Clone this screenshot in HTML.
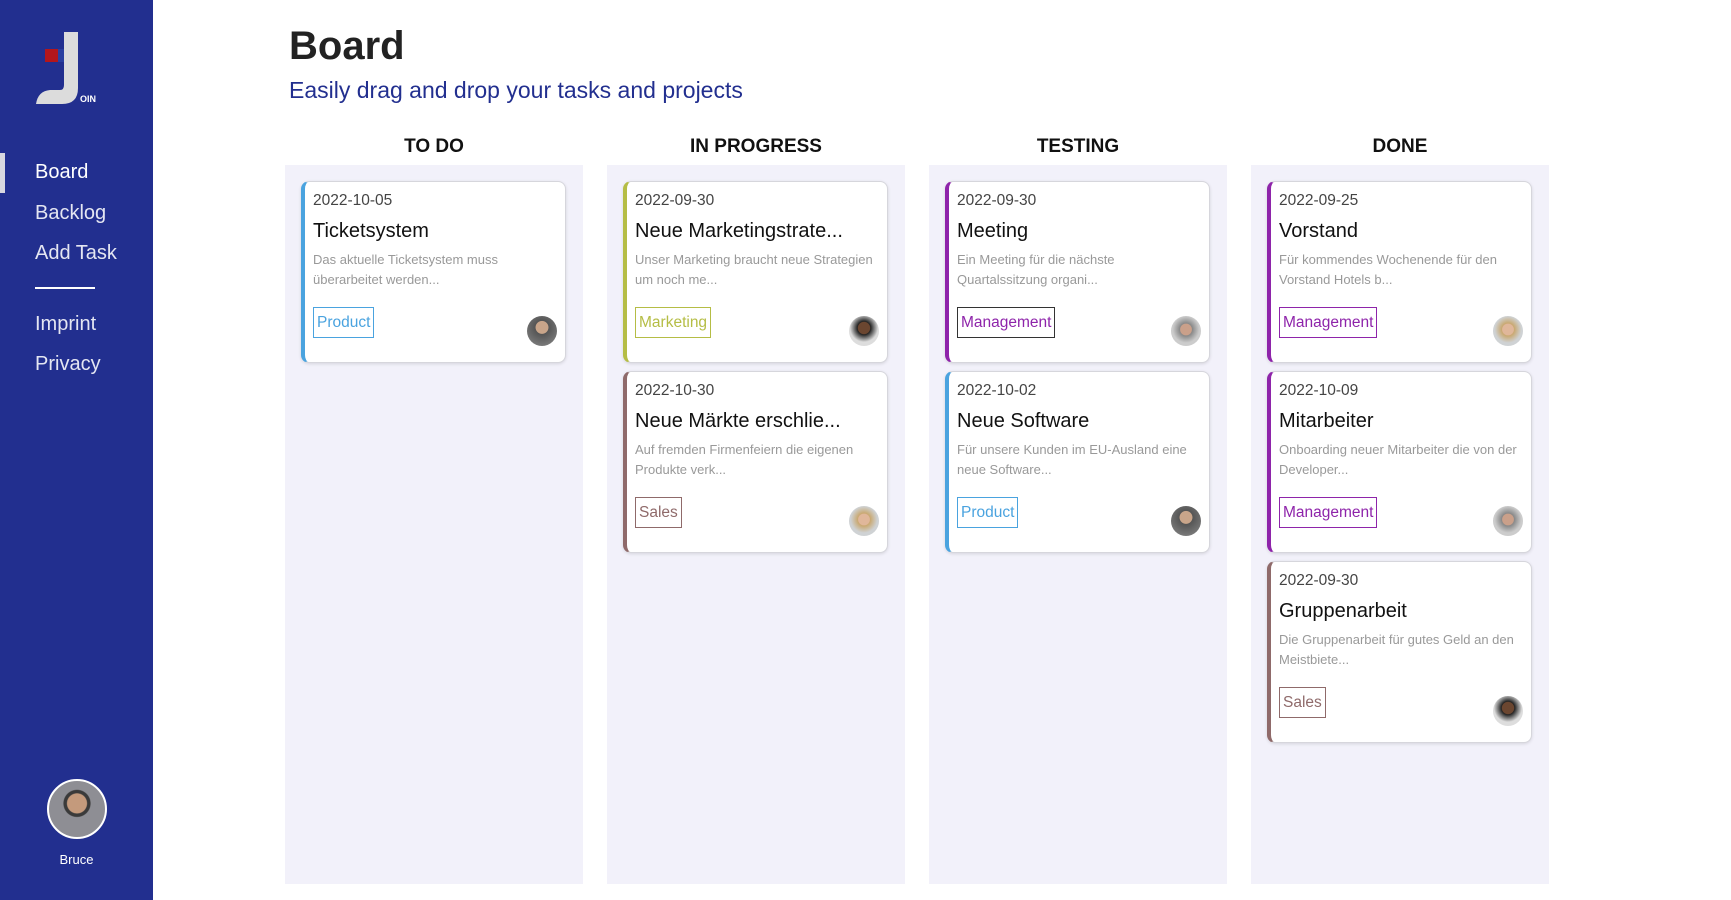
<!DOCTYPE html>
<html><head><meta charset="utf-8"><style>
*{margin:0;padding:0;box-sizing:border-box}
body{width:1731px;height:900px;background:#fff;font-family:"Liberation Sans",sans-serif;position:relative;overflow:hidden}
.sb{position:absolute;left:0;top:0;width:153px;height:900px;background:#222f8f}
.nav{position:absolute;left:35px;color:#fff;font-size:20px}
.nav.dim{color:#e4e6f2}
.act{position:absolute;left:0;top:153px;width:5px;height:40px;background:#d8d8e0}
.line{position:absolute;left:35px;top:287px;width:60px;height:2px;background:#fff}
h1{position:absolute;left:289px;top:24px;font-size:40px;font-weight:bold;color:#222}
.sub{position:absolute;left:289px;top:77px;font-size:23px;color:#222f8f}
.colh{position:absolute;top:136px;width:298px;text-align:center;font-size:19px;font-weight:bold;color:#111}
.col{position:absolute;top:165px;width:298px;height:719px;background:#f2f1fa}
.card{position:absolute;left:16px;width:265px;height:182px;background:#fff;border-radius:8px;border:1px solid #d6d6dc;border-left:4px solid;box-shadow:0 1px 3px rgba(0,0,0,.12)}
.d{position:absolute;left:8px;top:10px;font-size:15.5px;color:#444}
.t{position:absolute;left:8px;top:38px;font-size:20px;color:#111}
.ds{position:absolute;left:8px;top:68px;width:245px;font-size:13px;line-height:20px;color:#999}
.tag{position:absolute;left:8px;top:125px;height:31px;padding:0 3px;border:1px solid;font-size:15.5px;line-height:29px}
.av{position:absolute;left:222px;top:134px;width:30px;height:30px;border-radius:50%;background:radial-gradient(circle at 50% 38%,#c9a58a 0 26%,#555 28%,#8a8a8a 100%)}
</style></head><body>
<div class="sb">
<svg width="154" height="120" style="position:absolute;left:0;top:0">
<rect x="45" y="49" width="13" height="13" fill="#b3161c"/>
<rect x="58" y="49" width="6" height="13" fill="#2a3fa0"/>
<path d="M64 32 H78 V88 Q78 104 62 104 H36 Q38 91 50 90 H60 Q64 90 64 85 Z" fill="#dcdcdc"/>
<text x="80" y="102" font-size="9" font-weight="bold" fill="#fff" font-family="Liberation Sans">OIN</text>
</svg>
<div class="act"></div>
<div class="nav" style="top:161px">Board</div>
<div class="nav dim" style="top:202px">Backlog</div>
<div class="nav dim" style="top:242px">Add Task</div>
<div class="line"></div>
<div class="nav dim" style="top:313px">Imprint</div>
<div class="nav dim" style="top:353px">Privacy</div>
<div style="position:absolute;left:47px;top:779px;width:60px;height:60px;border-radius:50%;border:2px solid #fff;background:radial-gradient(circle at 50% 40%,#c49a7c 0 22%,#3a3a3a 24% 30%,#8e8e94 32%)"></div>
<div style="position:absolute;left:0;top:852px;width:153px;text-align:center;color:#fff;font-size:13px">Bruce</div>
</div>
<h1>Board</h1>
<div class="sub">Easily drag and drop your tasks and projects</div>

<div class="colh" style="left:285px">TO DO</div>
<div class="colh" style="left:607px">IN PROGRESS</div>
<div class="colh" style="left:929px">TESTING</div>
<div class="colh" style="left:1251px">DONE</div>

<div class="col" style="left:285px">
<div class="card" style="top:16px;border-left-color:#4aa3df"><div class="d">2022-10-05</div><div class="t">Ticketsystem</div><div class="ds">Das aktuelle Ticketsystem muss überarbeitet werden...</div><div class="tag" style="color:#4aa3df;border-color:#4aa3df">Product</div><div class="av"></div></div>
</div>
<div class="col" style="left:607px">
<div class="card" style="top:16px;border-left-color:#b5bd45"><div class="d">2022-09-30</div><div class="t">Neue Marketingstrate...</div><div class="ds">Unser Marketing braucht neue Strategien um noch me...</div><div class="tag" style="color:#b5bd45;border-color:#b5bd45">Marketing</div><div class="av" style="background:radial-gradient(circle at 50% 40%,#6b4630 0 25%,#222 28%,#ddd 60%)"></div></div>
<div class="card" style="top:206px;border-left-color:#8f6a6a"><div class="d">2022-10-30</div><div class="t">Neue Märkte erschlie...</div><div class="ds">Auf fremden Firmenfeiern die eigenen Produkte verk...</div><div class="tag" style="color:#8f6a6a;border-color:#8f6a6a">Sales</div><div class="av" style="background:radial-gradient(circle at 50% 45%,#e0b79a 0 25%,#c9a870 28%,#cfd2d4 60%)"></div></div>
</div>
<div class="col" style="left:929px">
<div class="card" style="top:16px;border-left-color:#8e24aa"><div class="d">2022-09-30</div><div class="t">Meeting</div><div class="ds">Ein Meeting für die nächste Quartalssitzung organi...</div><div class="tag" style="color:#8e24aa;border-color:#333">Management</div><div class="av" style="background:radial-gradient(circle at 50% 45%,#caa08a 0 25%,#888 28%,#ccc 60%)"></div></div>
<div class="card" style="top:206px;border-left-color:#4aa3df"><div class="d">2022-10-02</div><div class="t">Neue Software</div><div class="ds">Für unsere Kunden im EU-Ausland eine neue Software...</div><div class="tag" style="color:#4aa3df;border-color:#4aa3df">Product</div><div class="av"></div></div>
</div>
<div class="col" style="left:1251px">
<div class="card" style="top:16px;border-left-color:#8e24aa"><div class="d">2022-09-25</div><div class="t">Vorstand</div><div class="ds">Für kommendes Wochenende für den Vorstand Hotels b...</div><div class="tag" style="color:#8e24aa;border-color:#8e24aa">Management</div><div class="av" style="background:radial-gradient(circle at 50% 45%,#e0b79a 0 25%,#c9a870 28%,#cfd2d4 60%)"></div></div>
<div class="card" style="top:206px;border-left-color:#8e24aa"><div class="d">2022-10-09</div><div class="t">Mitarbeiter</div><div class="ds">Onboarding neuer Mitarbeiter die von der Developer...</div><div class="tag" style="color:#8e24aa;border-color:#8e24aa">Management</div><div class="av" style="background:radial-gradient(circle at 50% 45%,#caa08a 0 25%,#888 28%,#ccc 60%)"></div></div>
<div class="card" style="top:396px;border-left-color:#8f6a6a"><div class="d">2022-09-30</div><div class="t">Gruppenarbeit</div><div class="ds">Die Gruppenarbeit für gutes Geld an den Meistbiete...</div><div class="tag" style="color:#8f6a6a;border-color:#8f6a6a">Sales</div><div class="av" style="background:radial-gradient(circle at 50% 40%,#6b4630 0 25%,#222 28%,#ddd 60%)"></div></div>
</div>
</body></html>
